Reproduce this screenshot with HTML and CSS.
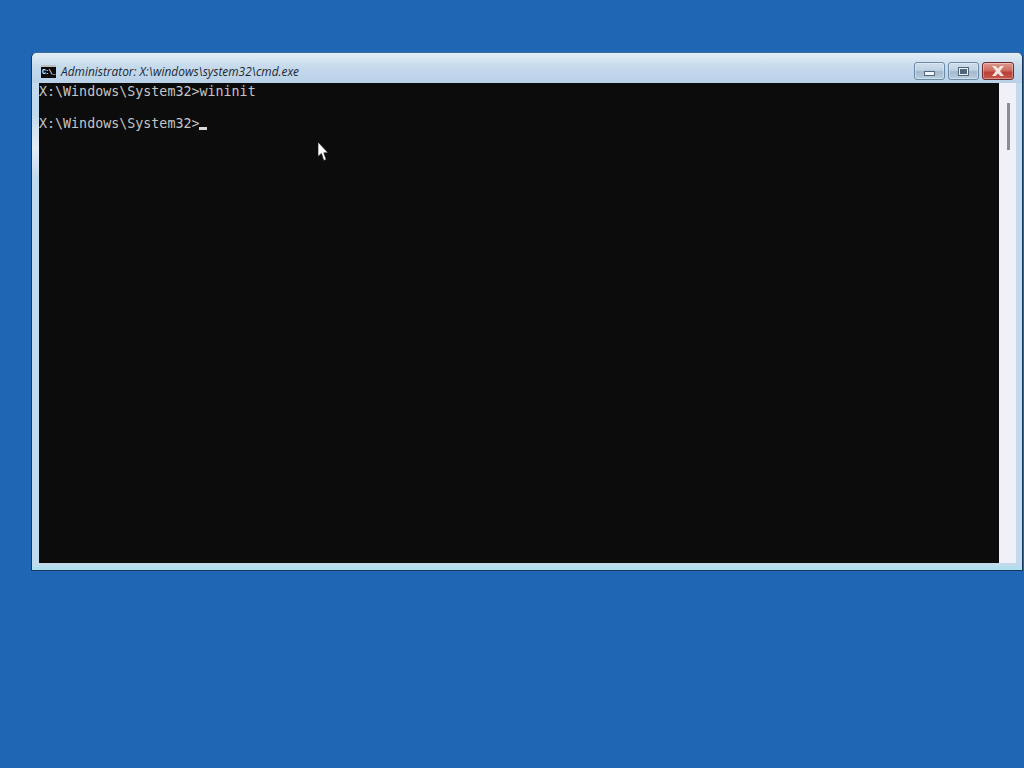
FILE: index.html
```html
<!DOCTYPE html>
<html lang="en">
<head>
<meta charset="utf-8">
<title>cmd.exe</title>
<link rel="stylesheet" href="styles.css">
</head>
<body>
<div class="window">
  <div class="titlebar">
    <div class="cmd-icon"><span class="cmd-icon-text">C:\_</span></div>
    <div class="title">Administrator: X:\windows\system32\cmd.exe</div>
    <div class="controls">
      <div class="btn btn-min"><span class="glyph-min"></span></div>
      <div class="btn btn-max"><span class="glyph-max"></span></div>
      <div class="btn btn-close">
        <svg class="glyph-close" width="14" height="10" viewBox="0 0 14 10"><path d="M1 0H4.6L7 2.6L9.4 0H13L9 5L13 10H9.4L7 7.4L4.6 10H1L5 5Z" fill="#f1e6e2"/></svg>
      </div>
    </div>
  </div>
  <div class="body">
    <pre class="console">X:\Windows\System32&gt;wininit

X:\Windows\System32&gt;<span class="caret"></span></pre>
    <div class="scrollbar"><div class="thumb"></div></div>
  </div>
</div>
<svg class="pointer" width="12" height="21" viewBox="0 0 12 21"><path d="M1 1V15.5L4.4 12.4L6.8 19.5L9.2 18.6L6.8 11.8H11Z" fill="#fff" stroke="#111" stroke-width=".6"/></svg>
</body>
</html>
```
FILE: styles.css
```css
html, body {
  margin: 0;
  height: 100%;
  overflow: hidden;
}
body {
  background: #1f66b4;
  position: relative;
  width: 1024px;
  height: 768px;
}
.window {
  position: absolute;
  left: 31px;
  top: 52px;
  width: 992px;
  height: 519px;
  box-sizing: border-box;
  display: flex;
  flex-direction: column;
  border: 1px solid #17375c;
  border-top-color: #3d6d98;
  border-radius: 6px 6px 0 0;
  background:
    linear-gradient(180deg, rgba(255,255,255,0) 60px, rgba(255,255,255,.55) 95px, rgba(255,255,255,0) 125px) 0 0 / 7px 100% no-repeat,
    linear-gradient(180deg, #c3d9ec 0, #c3d9ec calc(100% - 4px), #ace0ee calc(100% - 3px), #ace0ee 100%);
  padding: 0 6px 7px 7px;
}
.titlebar {
  height: 30px;
  flex: none;
  box-sizing: border-box;
  display: flex;
  align-items: center;
  margin: 0 -6px 0 -7px;
  padding: 6px 8px 0 9px;
  border-radius: 5px 5px 0 0;
  background: linear-gradient(180deg, #e4eef7 0, #c6daeb 45%, #b9d1e8 100%);
}
.cmd-icon {
  width: 15px;
  height: 13px;
  background: #0c0c0c;
  border-top: 2px solid #bdbdbd;
  box-sizing: border-box;
  display: flex;
  align-items: center;
  justify-content: center;
  flex: none;
}
.cmd-icon-text {
  font: bold 6.5px/9px "Liberation Mono", monospace;
  color: #fff;
  letter-spacing: -.6px;
}
.title {
  font: italic 11.9px/16px "Open Sans", sans-serif;
  color: #1c2733;
  margin-left: 5px;
  flex: 1;
  white-space: nowrap;
}
.controls {
  display: flex;
  gap: 3px;
}
.btn {
  height: 18px;
  box-sizing: border-box;
  border: 1px solid #6b8aa6;
  border-radius: 3px;
  display: flex;
  align-items: center;
  justify-content: center;
  background: linear-gradient(180deg, #cfdeeb 0, #c0d2e2 45%, #a3b9cc 55%, #b9cede 100%);
  box-shadow: inset 0 0 0 1px rgba(255,255,255,.35);
}
.btn-min { width: 31px; }
.btn-max { width: 31px; }
.btn-close {
  width: 32px;
  border-color: #6e2a2c;
  background: linear-gradient(180deg, #dc9a8e 0, #cf6d60 45%, #bd3f37 60%, #c45a50 100%);
}
.glyph-min {
  width: 11px;
  height: 5px;
  margin-top: 4px;
  box-sizing: border-box;
  background: #f2f6fa;
  border: 1px solid #50657a;
}
.glyph-max {
  width: 11px;
  height: 9px;
  box-sizing: border-box;
  background: #50657a;
  border: 2px solid #eef3f8;
  outline: 1px solid #50657a;
  outline-offset: -1px;
}
.glyph-close { display: block; }
.body {
  flex: 1;
  display: flex;
  min-height: 0;
  background: #0c0c0c;
}
.console {
  flex: 1;
  margin: 0;
  font: 13.33px/16px "DejaVu Sans Mono", monospace;
  color: #c4c4c4;
  background: #0c0c0c;
  padding-top: 1px;
}
.caret {
  display: inline-block;
  width: 8px;
  height: 3px;
  background: #d8d8d8;
  vertical-align: -2px;
}
.scrollbar {
  width: 17px;
  flex: none;
  background: #f0f0f8;
  padding: 20px 6px 0 8px;
  box-sizing: border-box;
}
.thumb {
  width: 3px;
  height: 47px;
  background: #8b8b90;
}
.pointer {
  position: absolute;
  left: 317px;
  top: 141px;
}
```
